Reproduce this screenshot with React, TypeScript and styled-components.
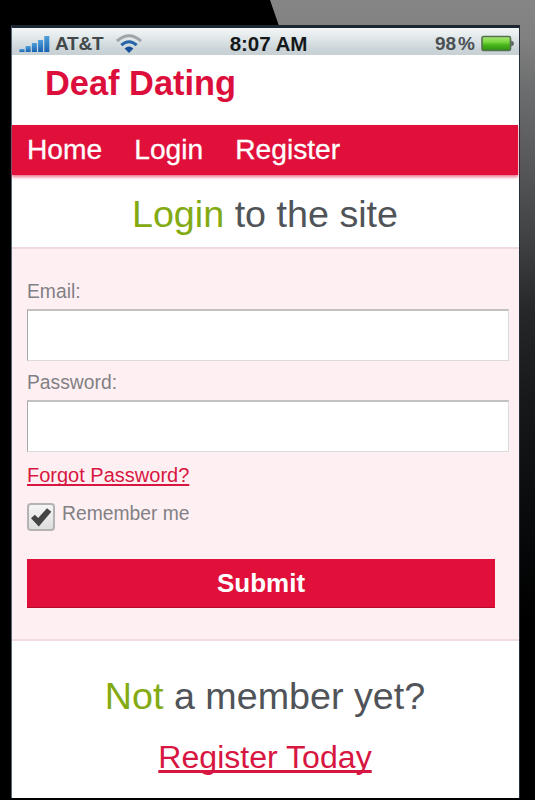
import React, { useState } from "react";
import styled, { createGlobalStyle } from "styled-components";

const Global = createGlobalStyle`
  * { box-sizing: border-box; }
  html, body { margin: 0; padding: 0; background: #000; }
  body { font-family: "Liberation Sans", Arial, sans-serif; overflow: hidden; }
`;

const Phone = styled.div`
  width: 535px;
  height: 800px;
  overflow: hidden;
  background: #000;
  position: relative;
  padding: 25px 15px 2px 11px;
`;

/* Diagonal reflection on the handset body */
const Glare = styled.div`
  position: absolute;
  inset: 0;
  clip-path: polygon(270px 0, 100% 0, 100% 100%, 519px 100%, 519px 26px, 279px 26px);
  background: linear-gradient(180deg, #858585 0, #808080 40px, #6c6d6e 90px, #555657 170px, #404142 240px, #262728 310px, #171819 400px, #0a0c0e 500px, #000 620px);
`;

const Screen = styled.div`
  position: relative;
  height: 773px;
  background: #fff;
  border-top: 3px solid #1d2731;
  border-left: 1px solid #56687c;
  border-right: 1px solid #26303a;
  display: flex;
  flex-direction: column;
`;

const StatusBar = styled.div`
  height: 27px;
  flex: none;
  display: grid;
  grid-template-columns: 1fr auto 1fr;
  align-items: center;
  padding: 4px 5px 0 7px;
  background: linear-gradient(#f3f6f7 0, #e2e8ea 35%, #ccd6da 75%, #c7d0d3);
  font-weight: bold;
  line-height: 23px;
`;

const StatusGroup = styled.div<{ $end?: boolean }>`
  display: flex;
  align-items: center;
  justify-content: ${(p) => (p.$end ? "flex-end" : "flex-start")};
`;

const Carrier = styled.span`
  font-size: 19px;
  color: #43484b;
  letter-spacing: -0.2px;
  margin: 0 12px 0 5px;
`;

const Clock = styled.span`
  font-size: 20.6px;
  letter-spacing: -0.1px;
  color: #15181a;
  padding-left: 4px;
`;

const Charge = styled.span`
  font-size: 19px;
  color: #4b5053;
  display: flex;
  gap: 2px;
  margin-right: 5px;
`;

const Brand = styled.h1`
  margin: 0;
  height: 70px;
  flex: none;
  padding: 8px 0 0 33px;
  font-size: 34.4px;
  line-height: 40px;
  color: #dc0f3c;
`;

const Nav = styled.nav`
  height: 50px;
  flex: none;
  margin-right: 1px;
  padding: 0 0 2px 15px;
  display: flex;
  align-items: center;
  gap: 32px;
  background: #e0103a;
  box-shadow: 0 2px 3px rgba(224, 16, 58, 0.6);
`;

const NavLink = styled.a`
  color: #fff;
  font-size: 28.2px;
  line-height: 32px;
  -webkit-text-stroke: 0.3px #fff;
`;

const Title = styled.h2<{ $height: number; $top: number }>`
  margin: 0;
  height: ${(p) => p.$height}px;
  padding: ${(p) => p.$top}px 1px 0 0;
  flex: none;
  font-size: 37.7px;
  line-height: 44px;
  font-weight: normal;
  text-align: center;
  color: #505458;
`;

const Accent = styled.span`
  color: #83aa12;
`;

const LoginForm = styled.form`
  height: 394px;
  flex: none;
  padding: 32px 10px 0 15px;
  background: #fef0f2;
  border-top: 2px solid #f1dadd;
  border-bottom: 2px solid #f3dcdf;
  display: flex;
  flex-direction: column;
  align-items: flex-start;
  font-size: 19.3px;
  line-height: 22px;
  color: #828084;
`;

const Label = styled.label`
  height: 28px;
  flex: none;
`;

const Field = styled.input`
  width: 482px;
  height: 52px;
  flex: none;
  margin-bottom: 11px;
  padding: 0 10px;
  font: inherit;
  background: #fff;
  border: 1px solid #dcdadb;
  border-top: 2px solid #c2c0c1;
  border-left-color: #a9a7a8;
  border-radius: 0;
  outline: none;
`;

const TextLink = styled.a<{ $large?: boolean }>`
  color: #d71641;
  text-decoration: underline;
  text-decoration-thickness: ${(p) => (p.$large ? 3 : 1.5)}px;
  text-decoration-skip-ink: none;
  text-underline-offset: 2px;
  font-size: ${(p) => (p.$large ? 32.1 : 20)}px;
`;

const ForgotRow = styled.div`
  padding-top: 1px;
`;

const Remember = styled.label`
  display: flex;
  align-items: flex-start;
  gap: 7px;
  margin: 16px 0 28px;
`;

const CheckBox = styled.span`
  width: 28px;
  height: 28px;
  border: 2px solid #b5b2b3;
  border-radius: 4px;
  background: linear-gradient(#f5f5f5, #dddddd);
  display: flex;
  align-items: center;
  justify-content: center;
`;

const Submit = styled.button`
  width: 468px;
  height: 49px;
  flex: none;
  border: 0;
  border-bottom: 1px solid #b90b2e;
  background: #e0103a;
  color: #fff;
  font: bold 26px "Liberation Sans", Arial, sans-serif;
`;

const JoinLine = styled.div`
  padding-right: 1px;
  text-align: center;
  line-height: 36px;
`;

const Signal = () => (
  <svg width="31" height="18" viewBox="0 0 31 18">
    <defs>
      <linearGradient id="sig" x1="0" y1="0" x2="0" y2="1">
        <stop offset="0" stopColor="#4f9fdc" />
        <stop offset="1" stopColor="#1762b1" />
      </linearGradient>
    </defs>
    {[3, 6, 9, 12, 16].map((h, i) => (
      <rect key={h} x={0.5 + i * 6.2} y={17 - h} width="5" height={h} fill="url(#sig)" />
    ))}
  </svg>
);

const Wifi = () => (
  <svg width="28" height="20" viewBox="0 0 28 20" fill="none">
    <path d="M2 7.2Q14-3.6 26 7.2" stroke="#9da5a9" strokeWidth="3" />
    <path d="M6.3 11.2Q14 4.2 21.7 11.2" stroke="#2865a6" strokeWidth="3" />
    <path d="M9.6 14.4Q14 10.4 18.4 14.4L14 19Z" fill="#174f98" />
  </svg>
);

const Battery = () => (
  <svg width="34" height="18" viewBox="0 0 34 18">
    <defs>
      <linearGradient id="charge" x1="0" y1="0" x2="0" y2="1">
        <stop offset="0" stopColor="#a9e879" />
        <stop offset=".4" stopColor="#79d63c" />
        <stop offset=".6" stopColor="#48b51c" />
        <stop offset="1" stopColor="#2e9310" />
      </linearGradient>
    </defs>
    <rect x="2" y="1.5" width="28.5" height="14" rx="1.5" fill="url(#charge)" stroke="#56714f" strokeWidth="1.6" />
    <path d="M31.2 5.5Q34 6.5 34 8.5T31.2 11.5Z" fill="#59635f" />
  </svg>
);

const Check = () => (
  <svg width="22" height="22" viewBox="0 0 22 22">
    <path d="M1 12.2L4.8 8.8L8.2 12L17 2.2L21.3 5.8L8.8 20.6Z" fill="#444" />
  </svg>
);

export default function App() {
  const [checked, setChecked] = useState(true);
  return (
    <>
      <Global />
      <Phone>
        <Glare />
        <Screen>
          <StatusBar>
            <StatusGroup>
              <Signal />
              <Carrier>AT&amp;T</Carrier>
              <Wifi />
            </StatusGroup>
            <Clock>8:07 AM</Clock>
            <StatusGroup $end>
              <Charge><span>98</span><span>%</span></Charge>
              <Battery />
            </StatusGroup>
          </StatusBar>
          <Brand>Deaf Dating</Brand>
          <Nav>
            <NavLink>Home</NavLink>
            <NavLink>Login</NavLink>
            <NavLink>Register</NavLink>
          </Nav>
          <Title $height={72} $top={17}><Accent>Login</Accent> to the site</Title>
          <LoginForm onSubmit={(e) => e.preventDefault()}>
            <Label htmlFor="email">Email:</Label>
            <Field id="email" type="email" />
            <Label htmlFor="password">Password:</Label>
            <Field id="password" type="password" />
            <ForgotRow><TextLink>Forgot Password?</TextLink></ForgotRow>
            <Remember onClick={() => setChecked(!checked)}>
              <CheckBox>{checked && <Check />}</CheckBox>
              Remember me
            </Remember>
            <Submit type="submit">Submit</Submit>
          </LoginForm>
          <Title $height={98} $top={33}><Accent>Not</Accent> a member yet?</Title>
          <JoinLine><TextLink $large>Register Today</TextLink></JoinLine>
        </Screen>
      </Phone>
    </>
  );
}
